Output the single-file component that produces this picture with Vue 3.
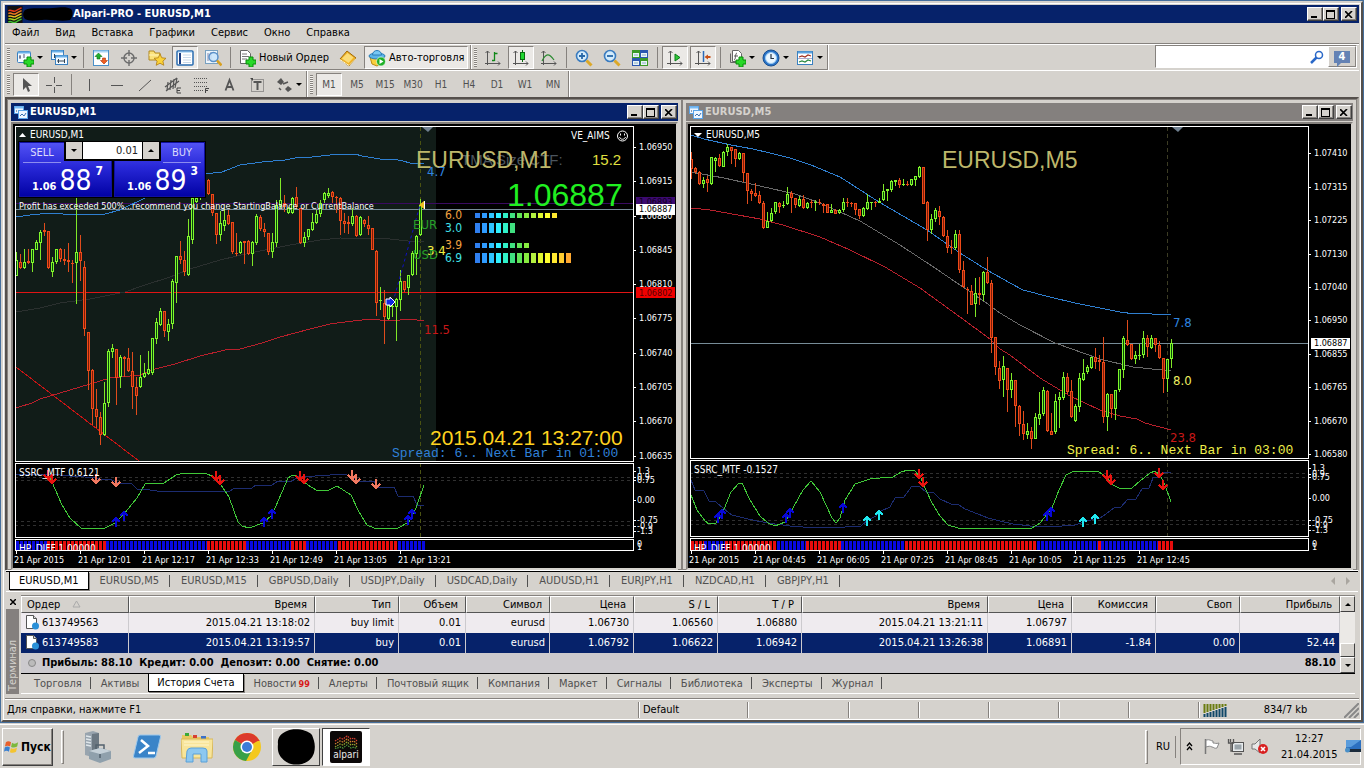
<script setup>
import { ref } from 'vue'

const menu = ['Файл', 'Вид', 'Вставка', 'Графики', 'Сервис', 'Окно', 'Справка']
const frames = ['M1', 'M5', 'M15', 'M30', 'H1', 'H4', 'D1', 'W1', 'MN']
const chartTabs = ['EURUSD,M1', 'EURUSD,M5', 'EURUSD,M15', 'GBPUSD,Daily', 'USDJPY,Daily', 'USDCAD,Daily', 'AUDUSD,H1', 'EURJPY,H1', 'NZDCAD,H1', 'GBPJPY,H1']
const termTabs = ['Торговля', 'Активы', 'История Счета', 'Новости', 'Алерты', 'Почтовый ящик', 'Компания', 'Маркет', 'Сигналы', 'Библиотека', 'Эксперты', 'Журнал']
const heads = ['Ордер', 'Время', 'Тип', 'Объем', 'Символ', 'Цена', 'S / L', 'T / P', 'Время', 'Цена', 'Комиссия', 'Своп', 'Прибыль']
const orders = [
  ['613749563', '2015.04.21 13:18:02', 'buy limit', '0.01', 'eurusd', '1.06730', '1.06560', '1.06880', '2015.04.21 13:21:11', '1.06797', '', '', ''],
  ['613749583', '2015.04.21 13:19:57', 'buy', '0.01', 'eurusd', '1.06792', '1.06622', '1.06942', '2015.04.21 13:26:38', '1.06891', '-1.84', '0.00', '52.44'],
]
const volume = ref('0.01')
const query = ref('')

/* Candles: high, body top, body bottom, low, direction; three units per pixel. */
const m1 = `397 420 467 467 g;403 425 444 447 r;388 427 445 447 g;388 423 430 432 r;386 388 428 455 g;360 366 389 391 g;331 336 368 420 g;309 331 336 349 r;333 334 445 446 r;410 426 457 470 g;387 388 427 433 g;385 386 418 427 r;388 416 422 434 r;369 420 427 457 r;421 428 431 489 r;234 397 430 551 g;345 397 422 482 r;423 441 626 648 r;636 636 754 811 r;748 750 866 915 r;808 868 892 925 r;877 891 944 974 r;787 850 944 947 g;687 693 848 861 g;672 684 695 713 g;687 688 773 855 r;705 711 772 803 g;708 710 718 770 r;684 714 752 757 r;697 754 802 868 r;770 802 827 885 r;705 771 800 804 g;729 759 772 775 g;694 747 762 765 g;653 655 760 764 g;593 606 656 672 g;564 573 616 619 g;573 574 632 652 r;598 613 635 662 g;478 484 613 627 g;409 409 488 549 g;363 408 421 432 r;393 421 457 467 r;297 348 466 468 g;230 235 359 372 g;230 235 245 248 g;180 190 235 240 g;150 160 230 232 g;177 180 223 225 r;222 223 280 288 r;279 280 346 372 r;272 309 346 362 g;268 300 317 332 g;270 286 311 315 r;305 307 397 402 r;338 398 402 407 r;363 366 400 402 g;362 363 368 431 r;361 364 402 404 r;364 367 402 438 g;283 289 368 375 g;285 290 327 332 r;309 328 337 352 r;338 340 395 405 r;340 367 396 413 g;240 255 368 380 g;174 240 258 265 g;225 250 262 275 r;260 265 278 282 g;231 233 279 281 g;201 232 262 264 r;265 265 370 371 r;337 352 370 380 g;327 328 352 359 g;280 307 330 333 g;270 283 309 312 g;240 250 283 290 g;215 220 240 250 g;204 218 228 235 g;214 216 230 250 r;228 230 235 278 r;232 233 304 345 r;279 304 312 340 r;288 305 312 342 r;264 288 312 317 g;286 288 348 350 r;288 290 346 349 g;298 301 312 320 r;288 316 326 344 r;323 325 391 391 r;391 392 550 587 r;500 541 543 570 g;510 548 592 672 r;545 555 598 600 g;540 558 562 590 g;534 538 560 662 g;450 483 541 572 g;483 484 511 515 r;465 466 503 524 g;392 400 466 468 g;345 347 402 465 g;238 255 345 347 g`
const m5 = `97 118 148 177 r;142 145 155 163 r;153 155 193 196 r;170 180 193 205 g;169 176 190 215 r;111 112 191 194 g;111 114 122 157 g;101 114 139 141 r;94 95 140 142 g;72 82 95 108 g;80 82 92 131 r;86 87 118 140 r;96 99 118 121 g;98 99 160 187 r;159 160 214 251 r;208 213 222 242 r;188 219 227 231 r;213 226 249 251 r;243 249 325 327 r;275 302 323 325 g;263 279 303 306 g;247 247 275 281 g;246 249 260 278 r;243 254 258 263 g;200 221 251 255 g;214 220 235 278 r;233 234 256 265 r;229 237 259 261 g;226 236 263 266 r;247 249 263 266 g;239 246 250 263 r;239 246 250 273 g;237 247 250 256 r;250 253 257 278 r;251 253 278 280 r;252 269 278 280 g;267 269 281 283 r;267 270 280 283 g;234 246 270 275 g;234 245 249 261 r;247 249 251 262 r;249 250 269 286 r;267 268 287 297 r;261 265 287 290 g;221 247 266 270 g;246 247 249 270 g;243 246 248 262 r;234 242 248 249 g;192 213 240 242 g;206 208 213 243 g;181 183 210 217 g;180 181 185 197 g;174 181 195 203 r;177 192 194 198 g;183 191 196 197 r;176 178 196 198 g;167 169 180 197 g;138 142 172 175 g;141 142 251 252 r;243 245 331 362 r;282 298 331 342 g;264 271 298 305 g;258 274 292 316 r;287 292 348 350 r;329 348 383 398 r;359 380 384 401 r;331 343 385 391 g;330 343 449 458 r;423 449 500 503 r;502 506 511 582 r;494 514 554 556 r;474 520 552 591 g;471 520 524 554 r;454 457 526 543 g;411 457 490 491 r;479 490 653 700 r;651 652 742 765 r;722 743 782 806 r;709 738 779 831 g;744 745 811 876 r;759 780 811 834 g;780 781 859 921 r;856 857 911 948 r;872 911 943 961 r;908 934 944 957 g;922 934 956 987 r;878 891 956 958 g;815 881 896 914 g;800 811 881 887 g;811 814 933 937 r;880 934 944 946 r;822 843 936 941 g;817 832 841 924 g;756 770 834 840 g;758 771 815 821 r;779 813 890 893 r;853 858 902 905 g;759 775 860 875 g;716 758 779 784 g;736 742 756 762 g;710 712 743 747 g;684 710 727 747 r;706 720 727 752 r;651 727 890 909 r;820 822 892 932 g;822 823 868 893 r;810 811 868 900 g;747 748 811 817 g;648 655 751 773 g;600 661 675 678 r;671 672 718 721 r;693 705 716 731 g;672 705 708 721 g;633 655 706 714 g;644 655 682 711 r;645 655 684 686 g;653 655 676 697 r;664 676 713 716 r;714 715 776 819 r;716 718 776 815 g;657 669 718 743 g`

function candles(text, x0) {
  const out = { g: ['', ''], r: ['', ''] }
  text.split(';').forEach((row, i) => {
    const [hi, top, bot, lo, side] = row.split(' ')
    const y = (v) => 120 + Math.round(v / 3)
    const x = x0 + 4 * i + 0.5
    const t = y(top) + 0.5
    const h = Math.max(0, y(bot) - y(top) - 1)
    out[side][0] += `M${x} ${y(hi)}V${y(lo)}`
    out[side][1] += h ? `M${x - 1} ${t}h2v${h}h-2z` : `M${x - 1.5} ${t}h3`
  })
  return out
}

const charts = [
  {
    name: 'EURUSD,M1', active: true, box: '13 124 663 444', l: 15, r: 633, main: 461, sub: 463, subEnd: 537, hist: 539,
    c: candles(m1, 16), now: 420, mark: 427,
    top: '16,217 30,215 50,213 63,214 80,215 105,214 120,210 145,198 205,174 222,172 240,165 262,162 285,160 300,157 312,157 330,155 355,154 362,156 380,159 398,160 403,161 410,163 424,163',
    mid: '16,312 40,308 60,303 90,299 125,292 145,285 170,277 190,269 220,260 250,253 290,245 320,240 340,238 390,239 408,241 424,242', midColor: '#2b302f',
    low: '16,408 32,403 40,399 60,393 80,387 110,378 140,375 155,369 175,364 200,356 225,350 240,349 262,343 280,337 310,329 330,324 345,322 370,319 390,321 410,319 424,321',
    line: 209, title: [416, 168],
    axis: [[147, '1.06950'], [181, '1.06915'], [216, '1.06880'], [250, '1.06845'], [284, '1.06810'], [318, '1.06775'], [353, '1.06740'], [387, '1.06705'], [421, '1.06670'], [456, '1.06635']],
    sax: [[471, '1.3'], [477, '0.9'], [480, '0.75'], [500, '0.00'], [520, '-0.75'], [526, '-0.9'], [531, '-1.3']],
    levels: [477, 480, 521, 525], ind: 'SSRC_MTF 0.6121',
    green: '48,475 52,482 62,505 70,518 81,528 105,528 115,523 123,515 137,498 145,484 164,483 176,475 184,473 205,473 216,478 221,485 229,497 238,522 242,526 249,528 263,523 272,515 282,492 288,478 293,475 297,476 308,485 316,490 329,490 337,486 351,495 359,512 367,525 374,528 398,528 409,522 416,508 424,485',
    navy: '16,474 45,474 60,475 70,476 85,477 97,478 100,479 112,480 118,483 132,484 137,489 150,490 157,491 230,491 235,488 252,488 256,485 272,485 278,481 292,481 298,477 315,476 330,475 345,474 352,477 358,481 374,481 378,487 394,487 398,496 413,496 417,505 424,505',
    down: [[48, 475, '#e81410'], [52, 479, '#e81410'], [96, 479, '#f07860'], [116, 482, '#f07860'], [216, 476, '#e81410'], [220, 480, '#e81410'], [300, 476, '#e81410'], [304, 479, '#e81410'], [352, 475, '#f07860'], [356, 479, '#f07860'], [376, 484, '#f07860']],
    up: [[116, 522, '#0808d8'], [124, 516, '#0808d8'], [264, 522, '#0808d8'], [272, 514, '#0808d8'], [408, 520, '#0808d8'], [412, 514, '#0808d8']],
    runs: [[16, 47, 0], [47, 106, 1], [106, 207, 0], [207, 246, 1], [246, 291, 0], [291, 306, 1], [306, 338, 0], [338, 398, 1], [398, 425, 0]],
    dates: ['2015', '12:01', '12:17', '12:33', '12:49', '13:05', '13:21'],
    spread: [392, 457, '#3080d8', 'Spread: 6.. Next Bar in 01:00'],
    tags: [[427, 176, '#2f86e0', '4.7'], [427, 255, '#f0f040', '3.4'], [424, 334, '#c81818', '11.5']],
  },
  {
    name: 'EURUSD,M5', active: false, box: '688 124 663 444', l: 690, r: 1308, main: 458, sub: 460, subEnd: 536, hist: 538,
    c: candles(m5, 691), now: 1167, mark: 1177,
    top: '691,135 704,139 731,145 753,149 770,153 790,158 811,165 840,177 879,202 927,230 960,253 987,270 1010,283 1023,290 1050,297 1075,303 1100,308 1120,312 1135,314 1145,313 1152,314 1171,314',
    mid: '691,172 724,178 760,186 795,194 820,203 860,221 900,245 935,268 960,285 985,302 1000,313 1020,325 1055,343 1100,359 1133,367 1171,371', midColor: '#6a6a6a',
    low: '691,208 710,210 738,215 760,219 783,225 820,237 850,250 885,267 920,288 960,317 990,339 1000,349 1010,355 1040,378 1070,396 1100,410 1120,416 1137,419 1145,423 1171,430',
    line: 343, title: [942, 168],
    axis: [[153, '1.07410'], [187, '1.07315'], [220, '1.07225'], [254, '1.07130'], [287, '1.07040'], [320, '1.06950'], [354, '1.06855'], [387, '1.06765'], [421, '1.06670'], [454, '1.06580']],
    sax: [[468, '1.3'], [474, '0.9'], [477, '0.75'], [498, '0.00'], [520, '-0.75'], [525, '-0.9'], [530, '-1.3']],
    levels: [473, 477, 520, 524], ind: 'SSRC_MTF -0.1527',
    green: '691,495 697,510 705,521 709,524 716,523 722,514 731,492 739,483 742,483 750,500 760,516 768,523 775,526 785,522 793,508 803,490 811,481 820,492 832,518 836,523 840,518 845,500 855,484 870,479 880,478 893,477 901,472 908,470 915,471 921,478 926,490 932,503 940,516 948,525 958,528 1032,528 1040,523 1052,508 1059,490 1066,475 1074,471 1098,471 1106,477 1113,485 1119,488 1132,488 1140,481 1150,473 1155,471 1160,475 1165,485 1171,502',
    navy: '691,480 695,490 704,491 709,501 716,502 724,509 732,515 744,518 757,521 775,524 790,526 803,527 845,527 861,526 868,520 876,516 881,511 890,507 895,498 904,497 912,486 919,486 926,492 934,493 940,499 951,504 959,505 965,509 978,514 988,518 1000,521 1013,524 1030,526 1050,527 1075,525 1087,521 1100,518 1106,514 1114,508 1121,507 1128,499 1136,499 1142,489 1149,488 1153,478 1160,477 1164,472 1171,472',
    down: [[919, 474, '#e81410'], [923, 482, '#e81410'], [1107, 475, '#e81410'], [1111, 480, '#e81410'], [1159, 473, '#e81410'], [1163, 485, '#e81410']],
    up: [[718, 518, '#0808d8'], [722, 514, '#0808d8'], [786, 518, '#0808d8'], [790, 513, '#0808d8'], [843, 508, '#0808d8'], [1047, 516, '#0808d8'], [1051, 512, '#0808d8'], [867, 521, '#20e8f0'], [879, 515, '#20e8f0'], [1083, 522, '#20e8f0'], [1095, 519, '#20e8f0']],
    runs: [[691, 704, 1], [704, 725, 0], [725, 777, 1], [777, 806, 0], [806, 841, 1], [841, 905, 0], [905, 1037, 1], [1037, 1098, 0], [1098, 1101, 1], [1101, 1158, 0], [1158, 1173, 1]],
    dates: ['2015', '04:45', '06:05', '07:25', '08:45', '10:05', '11:25', '12:45'],
    spread: [1067, 454, '#f0f04a', 'Spread: 6.. Next Bar in 03:00'],
    tags: [[1173, 327, '#2f86e0', '7.8'], [1173, 385, '#f0f060', '8.0'], [1170, 442, '#c81818', '23.8']],
  },
]

const heat = ['#2f7ff0', '#2f9cff', '#2fc4ff', '#30f0ff', '#30f0c8', '#40e080', '#62e458', '#88ec40', '#b4f040', '#e0f830', '#ffff30', '#ffe830', '#ffcc30', '#ffa830']
const meters = [[213, 5, 12, '6.0', '#f0a040', 219], [223, 10, 6, '3.0', '#40e0e8', 232], [243, 5, 8, '3.9', '#f0a040', 249], [253, 10, 14, '6.9', '#40e0e8', 262]]

const plus = '<path d="M9 8h4v3h3v4h-3v3H9v-3H6v-4h3z" transform="translate(2 0)" fill="#28d828" stroke="#0a8a0a"/>'
const win = '<rect x="1.5" y="2.5" width="13" height="11" rx="1" fill="#f4faff" stroke="#3a80c0"/><path d="M2 3.500h12" stroke="#6ab0e8" stroke-width="2"/>'
const icons = {
  newChart: win + '<path d="M4 6v4M3 8h2M8 5v4" stroke="#557"/>' + plus,
  profiles: '<rect x="1.500" y="1.500" width="12" height="9" fill="#f4faff" stroke="#3a80c0"/><path d="M2 2.500h11" stroke="#6ab0e8" stroke-width="2"/><path d="M4.500 5v4"  stroke="#345"/><rect x="5.500" y="6.500" width="12" height="9" fill="#f4faff" stroke="#3a80c0"/><path d="M6 7.500h11" stroke="#6ab0e8" stroke-width="2"/><path d="M8.500 10v4M7 12h7M14.500 10v4" stroke="#345"/>',
  market: '<rect x="1.500" y="1.500" width="15" height="15" fill="#fff" stroke="#4a90c8"/><path d="M2 2.500h14" stroke="#a8d4f4" stroke-width="2"/><path d="M6.500 4l3.500 3.500H8V10H5V7.500H3z" fill="#20b030" stroke="#0a7018" stroke-width=".6"/><path d="M12 15l-3.500-3.500h2V9h3v2.500h2z" fill="#f06020" stroke="#b03008" stroke-width=".6"/>',
  cross: '<g fill="none" stroke="#6c6c6c" stroke-width="1.400"><circle cx="9" cy="9" r="5"/><path d="M9 1v6M9 11v6M1 9h6M11 9h6"/></g>',
  folderStar: '<path d="M1 2h5l1 2h5v7H1z" fill="#fbe27a" stroke="#b08820"/><path d="M1 6h11" stroke="#fff3b8"/><path d="M12 5l1.800 3.800 4.200.5-3.100 2.800.9 4.200-3.800-2.100-3.800 2.100.9-4.200L6 9.300l4.200-.5z" fill="#fbd33a" stroke="#b07c10" stroke-width=".8"/>',
  navigator: '<rect x="1" y="2" width="16" height="14" rx="1" fill="#fff" stroke="#2a6cb0" stroke-width="1.500"/><path d="M2 3h14" stroke="#8cc4f0"/><path d="M3 4h2v11H3z" fill="#1c3c80"/><path d="M7 6h8M7 8.500h8M7 11h8M7 13.500h8" stroke="#c8d8e8"/>',
  tester: '<rect x="1.500" y="1.500" width="12" height="13" fill="#eef6fc" stroke="#78a0c0"/><path d="M4 4v8M7 3v8" stroke="#88a"/><circle cx="9.500" cy="8" r="4.500" fill="#c8e4fa" fill-opacity=".85" stroke="#5a90c8" stroke-width="1.500"/><path d="M13 11.500l4.500 5" stroke="#d8a020" stroke-width="2.600"/>',
  order: '<path d="M2.500 1.500h7l3 3v10h-10z" fill="#fff" stroke="#666"/><path d="M4 5h5M4 7.500h7M4 10h5" stroke="#777"/>' + plus,
  book: '<path d="M1 10L8 2l9 7-7 8z" fill="#f0b428" stroke="#a06808"/><path d="M3 9.500L8.500 4l6 4.500L9.500 14z" fill="#fbdc78"/><path d="M1 10.500l9 6 7-7" fill="none" stroke="#fff2c0"/>',
  auto: '<path d="M2 8h14l-2 6-5 3-5-2z" fill="#f8cf3c" stroke="#b88c14"/><ellipse cx="9" cy="7" rx="8" ry="3" fill="#5ab4e8" stroke="#2a7cb8"/><path d="M4.500 6c0-6 9-6 9 0z" fill="#78c8f4" stroke="#2a7cb8"/><circle cx="13" cy="12.500" r="4.500" fill="#20b028" stroke="#fff" stroke-width=".6"/><path d="M11.500 10v5l4-2.500z" fill="#fff"/>',
  bars: '<path d="M3.500 2v14M1 14.500h15M1.500 4l2-2 2 2M14 12.500l2 2-2 2" fill="none" stroke="#555"/><path d="M10.500 3v9M10.500 4.500h3M8 11.500h2.500" fill="none" stroke="#108818" stroke-width="1.300"/>',
  candle: '<path d="M3.500 2v14M1 14.500h15M1.500 4l2-2 2 2M14 12.500l2 2-2 2" fill="none" stroke="#555"/><path d="M10.500 1v12" stroke="#0a6a10"/><rect x="8.500" y="3.500" width="4" height="7" fill="#20d830" stroke="#0a6a10"/>',
  linec: '<path d="M3.500 2v14M1 14.500h15M1.500 4l2-2 2 2M14 12.500l2 2-2 2" fill="none" stroke="#555"/><path d="M2 12c4-8 7-8 12-1" fill="none" stroke="#2a8a30" stroke-width="1.200"/>',
  zin: '<circle cx="7" cy="7" r="5.500" fill="#d4ecfc" stroke="#3a7cc0" stroke-width="1.600"/><path d="M7 4v6M4 7h6" stroke="#2868a8" stroke-width="1.800"/><path d="M11.500 11.500l5 5" stroke="#dca828" stroke-width="3"/>',
  zout: '<circle cx="7" cy="7" r="5.500" fill="#d4ecfc" stroke="#3a7cc0" stroke-width="1.600"/><path d="M4 7h6" stroke="#2868a8" stroke-width="1.800"/><path d="M11.500 11.500l5 5" stroke="#dca828" stroke-width="3"/>',
  tile: '<path d="M1 1h8v8H1zM9 9h8v8H9z" fill="#3a9a28"/><path d="M9 1h8v8H9zM1 9h8v8H1z" fill="#2a58b0"/><path d="M2 4h6v4H2zM10 4h6v4h-6zM2 12h6v4H2zM10 12h6v4h-6z" fill="#e8f4f8"/><path d="M3 6h4M11 6h4M3 14h4M11 14h4" stroke="#8ab0c0"/>',
  scroll: '<path d="M4.500 2v14M1 14.500h15M2.500 4l2-2 2 2M14 12.500l2 2-2 2" fill="none" stroke="#555"/><path d="M9 5v7l5-3.500z" fill="#30c838" stroke="#0a7a18"/>',
  shift: '<path d="M4.500 2v14M1 14.500h15M2.500 4l2-2 2 2M14 12.500l2 2-2 2" fill="none" stroke="#555"/><path d="M9.500 2v11" stroke="#2a6ab8" stroke-width="1.500"/><path d="M10.500 8L14 5.500V7h2.500v2H14v1.500z" fill="#c85018"/>',
  indic: '<path d="M4.500 1.500h6l3 3v8h-9z" fill="#fff" stroke="#666"/><path d="M2.500 4.500v9h8" fill="none" stroke="#666"/><path d="M9 4c-2 0-1 7-3 7M6 7h4" fill="none" stroke="#555"/>' + plus,
  clock: '<circle cx="9" cy="9" r="8" fill="#2a74c8" stroke="#174e90"/><circle cx="9" cy="9" r="5.500" fill="#eaf6ff" stroke="#9cccf4"/><path d="M9 5v4.500h3" fill="none" stroke="#234" stroke-width="1.200"/>',
  templ: '<rect x="1.500" y="2.500" width="15" height="13" fill="#fff" stroke="#3a80c0"/><path d="M2 3.500h14" stroke="#5aa4e0" stroke-width="2"/><path d="M3 8l3-1 3 1 3-2 3 1" fill="none" stroke="#a03020" stroke-width="1.200"/><path d="M3 13l3-1 3 1 3-2 3 1" fill="none" stroke="#2a8a40" stroke-width="1.200"/><path d="M2 9.500h14" stroke="#aac"/>',
  cursor: '<path d="M6 2v12l3-3 2 5 2-1-2-5h4z" fill="#555"/>',
  cross2: '<path d="M9.500 1v6M9.500 11v6M1 9.500h6M11 9.500h6" stroke="#555"/>',
  vline: '<path d="M9.500 3v12" stroke="#555"/>',
  hline: '<path d="M3 9.500h12" stroke="#555"/>',
  trend: '<path d="M3 15L15 4" stroke="#555"/>',
  channel: '<path d="M1 11L13 2M2 15L15 5M4 6l-1 8M7 4L6 14M10 3L9 13M13 2l-2 10" stroke="#555" stroke-width="1.200"/><path d="M17 12h-4v5h4M13 14.500h3" fill="none" stroke="#444"/>',
  fibo: '<path d="M2 2.500h14M2 6.500h14M2 10.500h14M2 14.500h9" stroke="#555" stroke-dasharray="1 1"/><path d="M17 12.500h-3.500V17M13.500 14.500H16" fill="none" stroke="#444"/>',
  txt: '<path d="M5.500 14.500L9.500 4l4 10.500M7 11h5" fill="none" stroke="#555" stroke-width="1.800"/>',
  label: '<rect x="3.500" y="3.500" width="12" height="12" fill="none" stroke="#555" stroke-dasharray="1 1"/><path d="M5.500 6h8M9.500 6v8" stroke="#555" stroke-width="2"/><path d="M2 2h3v3z" fill="#444"/>',
  arrows: '<path d="M2 6l4-4 3 4-3 3zM10 13l3-3 4 3-4 3z" fill="#555"/><path d="M4 12l2 2M8 8l5-2" stroke="#555" stroke-width="1.500"/>',
  child: '<rect x=".5" y=".5" width="9" height="7" fill="#eef6ff" stroke="#5aa4e8"/><path d="M1 1.500h8" stroke="#7abcf4" stroke-width="2"/><rect x="4.500" y="4.500" width="9" height="8" fill="#eef6ff" stroke="#5aa4e8"/><path d="M6 10l2-2 2 2 2-3" fill="none" stroke="#3a70b0"/><path d="M2 5h1" stroke="#346"/>',
}
const bar1 = [
  { i: 'newChart', t: 'Новый график', d: 1 }, { i: 'profiles', t: 'Профили', d: 1 }, { s: 1 },
  { i: 'market', t: 'Обзор рынка' }, { i: 'cross', t: 'Окно данных' }, { i: 'folderStar', t: 'Навигатор' },
  { i: 'navigator', t: 'Терминал', on: 1 }, { i: 'tester', t: 'Тестер стратегий' }, { s: 1 },
  { i: 'order', text: 'Новый Ордер' }, { i: 'book', t: 'MetaEditor', g: 1 }, { i: 'auto', text: 'Авто-торговля', on: 1, g: 1 },
]
const bar2 = [
  { i: 'bars', t: 'Бары' }, { i: 'candle', t: 'Свечи', on: 1 }, { i: 'linec', t: 'Линия' }, { s: 1 },
  { i: 'zin', t: 'Увеличить' }, { i: 'zout', t: 'Уменьшить' }, { i: 'tile', t: 'Окна рядом' }, { s: 1 },
  { i: 'scroll', t: 'Автопрокрутка', on: 1 }, { i: 'shift', t: 'Сдвиг графика', on: 1 }, { s: 1 },
  { i: 'indic', t: 'Индикаторы', d: 1 }, { i: 'clock', t: 'Периоды', d: 1 }, { i: 'templ', t: 'Шаблоны', d: 1 },
]
const bar3 = [
  { i: 'cursor', t: 'Курсор', on: 1 }, { i: 'cross2', t: 'Перекрестие' }, { s: 1 },
  { i: 'vline', t: 'Вертикальная линия' }, { i: 'hline', t: 'Горизонтальная линия' }, { i: 'trend', t: 'Трендовая линия' },
  { i: 'channel', t: 'Канал' }, { i: 'fibo', t: 'Фибоначчи' }, { i: 'txt', t: 'Текст' }, { i: 'label', t: 'Метка' },
  { i: 'arrows', t: 'Стрелки', d: 1 },
]
</script>

<template>
  <div class="desktop">
    <main class="window">
      <header class="title">
        <svg class="logo" viewBox="0 0 16 18"><rect width="16" height="18" fill="#111" /><g fill="none" stroke-width="1.500"><path d="M1 5c3-2 5 2 8 0s4-2 6-3" stroke="#e83818" /><path d="M1 8c3-2 5 2 8 0s4-2 6-3" stroke="#f07820" /><path d="M1 11c3-2 5 2 8 0s4-2 6-3" stroke="#f0c020" /><path d="M1 14c3-2 5 2 8 0s4-2 6-3" stroke="#a0d020" /><path d="M1 17c3-2 5 2 8 0s4-2 6-3" stroke="#40c030" /></g></svg>
        <svg class="scrib" viewBox="0 0 50 14"><path d="M2 3C8 0 20 2 30 1s14-1 18 1c3 4 1 9-1 11-10 2-18-1-28 0S6 14 2 12C-1 9 0 5 2 3z" fill="#000" /></svg>
        <h1>Alpari-PRO - EURUSD,M1</h1>
        <div class="wbtns">
          <button aria-label="Свернуть"><i class="min"></i></button><button aria-label="Развернуть"><i class="max"></i></button><button class="x" aria-label="Закрыть"><svg viewBox="0 0 8 7"><path d="M0 0l7 7M7 0L0 7" stroke="#000" stroke-width="1.600" /></svg></button>
        </div>
      </header>
      <nav class="menu"><a v-for="m in menu" :key="m" href="#">{{ m }}</a></nav>

      <div class="bars">
        <div class="row">
          <div class="tools">
            <span class="grip"></span>
            <template v-for="(b, k) in bar1" :key="k">
              <span v-if="b.s" class="sep"></span>
              <button v-else class="tb" :class="{ on: b.on, wide: b.d, txt: b.text, gap: b.g }" :aria-label="b.t || b.text">
                <svg class="ico" viewBox="0 0 18 18" v-html="icons[b.i]"></svg>
                <span v-if="b.text">{{ b.text }}</span><i v-if="b.d" class="dd"></i>
              </button>
            </template>
          </div>
          <div class="tools">
            <span class="grip"></span>
            <template v-for="(b, k) in bar2" :key="k">
              <span v-if="b.s" class="sep"></span>
              <button v-else class="tb" :class="{ on: b.on, wide: b.d }" :aria-label="b.t">
                <svg class="ico" viewBox="0 0 18 18" v-html="icons[b.i]"></svg><i v-if="b.d" class="dd"></i>
              </button>
            </template>
          </div>
          <div class="search">
            <input v-model="query" type="text" aria-label="Поиск" />
            <svg class="lens" viewBox="0 0 14 14"><circle cx="9" cy="5" r="3.500" fill="#fff" stroke="#2a68c8" stroke-width="1.500" /><path d="M6.500 7.500L1 13" stroke="#2a68c8" stroke-width="2.500" /></svg>
            <button aria-label="Сообщения"><span class="bubble">4</span></button>
          </div>
        </div>
        <div class="row">
          <div class="tools">
            <span class="grip"></span>
            <template v-for="(b, k) in bar3" :key="k">
              <span v-if="b.s" class="sep"></span>
              <button v-else class="tb" :class="{ on: b.on, wide: b.d }" :aria-label="b.t">
                <svg class="ico" viewBox="0 0 18 18" v-html="icons[b.i]"></svg><i v-if="b.d" class="dd"></i>
              </button>
            </template>
          </div>
          <div class="tools">
            <span class="grip"></span>
            <button v-for="(f, k) in frames" :key="f" class="tb tf" :class="{ on: k === 0 }">{{ f }}</button>
          </div>
        </div>
      </div>

      <section class="mdi">
        <article v-for="(c, n) in charts" :key="c.name" class="child">
          <header class="ctitle" :class="{ off: !c.active }">
            <svg class="cico" viewBox="0 0 14 13" v-html="icons.child"></svg>
            <h2>{{ c.name }}</h2>
            <div class="wbtns">
              <button aria-label="Свернуть"><i class="min"></i></button><button aria-label="Развернуть"><i class="max"></i></button><button class="x" aria-label="Закрыть"><svg viewBox="0 0 8 7"><path d="M0 0l7 7M7 0L0 7" stroke="#000" stroke-width="1.600" /></svg></button>
            </div>
          </header>
          <div class="cbody">
            <svg class="chart" :viewBox="c.box">
              <defs><clipPath :id="'h' + n"><rect :x="c.l" :y="c.hist" width="300" :height="550 - c.hist" /></clipPath></defs>
              <rect v-if="n === 0" x="16" y="127" width="420" height="334" fill="#111c18" />
              <g shape-rendering="crispEdges" fill="none">
                <path :d="`M${c.now + 0.5} 127V${c.subEnd}`" :stroke="n ? '#3c3c24' : '#4a5212'" stroke-dasharray="4 3" />
                <path v-for="l in c.levels" :key="l" :d="`M${c.l} ${l + 0.5}H${c.r}`" stroke="#303030" stroke-dasharray="3 3" />
                <template v-if="n === 0">
                  <path d="M16 203.500H634" stroke="#3a0a60" />
                  <path d="M16 292.500H634" stroke="#e01414" />
                  <path d="M16 367L139 461" stroke="#c81414" />
                </template>
                <path :d="`M${c.l} ${c.line + 0.5}H${c.r}`" stroke="#778c98" />
                <polyline :points="c.mid" :stroke="c.midColor" />
                <polyline :points="c.top" stroke="#2f7fd0" />
                <polyline :points="c.low" stroke="#b8202c" />
                <path :d="c.c.r[0]" stroke="#e04c1c" />
                <path :d="c.c.r[1]" stroke="#f04a18" fill="#7c1c08" />
                <path :d="c.c.g[0]" stroke="#80e828" />
                <path :d="c.c.g[1]" stroke="#80f82c" fill="#06480a" />
                <polyline :points="c.navy" stroke="#1c2c70" />
                <polyline :points="c.green" stroke="#40c838" />
                <path v-for="(r, k) in c.runs" :key="k" :d="`M${r[0]} 545H${r[1]}`" :stroke="r[2] ? '#e80c0c' : '#0808e0'" stroke-width="9" stroke-dasharray="3 1" />
                <path v-for="(a, k) in c.down" :key="'d' + k" :d="`M${a[0]} ${a[1] - 5}v9M${a[0] - 4} ${a[1]}l4 4 4-4`" :stroke="a[2]" stroke-width="2" />
                <path v-for="(a, k) in c.up" :key="'u' + k" :d="`M${a[0]} ${a[1] + 5}v-9M${a[0] - 4} ${a[1]}l4-4 4 4`" :stroke="a[2]" stroke-width="2" />
                <g stroke="#fff">
                  <rect :x="c.l + 0.5" y="126.500" :width="c.r - c.l" :height="c.main - 126" />
                  <rect :x="c.l + 0.5" :y="c.sub + 0.5" :width="c.r - c.l" :height="c.subEnd - c.sub" />
                  <rect :x="c.l + 0.5" :y="c.hist + 0.5" :width="c.r - c.l" :height="550 - c.hist" />
                  <path v-for="a in c.axis" :key="a[0]" :d="`M${c.r} ${a[0] + 0.5}h3`" />
                  <path v-for="a in c.sax" :key="'s' + a[0]" :d="`M${c.r} ${a[0] + 0.5}h3`" />
                  <path v-for="(d, k) in c.dates" :key="d" :d="`M${c.l + 1.5 + 64 * k} 551v3`" />
                </g>
              </g>
              <path :d="`M${c.mark - 5} 127h11l-5 5z`" fill="#708090" />

              <template v-if="n === 0">
                <text class="a" x="461" y="165" font-size="15" fill="#4c555e">TMA Size CTF:</text>
                <text class="a" x="592" y="165" font-size="15" fill="#e0e040">15.2</text>
              </template>
              <text class="a" :x="c.title[0]" :y="c.title[1]" font-size="23" fill="#bdb76b">{{ c.name }}</text>
              <text v-for="t in c.tags" :key="t[3]" :x="t[0]" :y="t[1]" font-size="13" :fill="t[2]">{{ t[3] }}</text>
              <text class="m" :x="c.spread[0]" :y="c.spread[1]" font-size="13" :fill="c.spread[2]">{{ c.spread[3] }}</text>

              <template v-if="n === 0">
                <path d="M393 302L420 205" stroke="#1010c0" stroke-dasharray="3 3" />
                <path d="M386 299h4v-2l5 5-5 5v-2h-4z" fill="#1028e0" stroke="#fff" />
                <path d="M419 205l5-4v8z" fill="#f0c020" /><path d="M424.500 201v8" stroke="#fff" />
                <text class="a" x="507" y="206" font-size="32" fill="#20f020">1.06887</text>
                <text class="a" x="430" y="445" font-size="21" fill="#ffd21f">2015.04.21 13:27:00</text>
                <text x="413" y="229" font-size="13" fill="#28a028">EUR</text>
                <text x="413" y="259" font-size="13" fill="#28a028">USD</text>
                <g v-for="m in meters" :key="m[0]">
                  <text x="445" :y="m[5]" font-size="12" :fill="m[4]">{{ m[3] }}</text>
                  <rect v-for="k in m[2]" :key="k" :x="468 + 7 * k" :y="m[0]" width="5" :height="m[1]" :fill="heat[k - 1]" />
                </g>
                <text x="19" y="209" font-size="9" fill="#fff">Profit has exceeded 500%...recommend you change StartingBalance or CurrentBalance</text>
                <text x="571" y="139" font-size="10" fill="#fff">VE_AIMS</text>
                <g fill="none" stroke="#fff"><circle cx="622.500" cy="136" r="5" /><path d="M619.500 137c1 3 5 3 6 0M620.500 133.500v2M624.500 133.500v2" /></g>
                <path d="M19 137h7l-3.500-4z" fill="#fff" />
              </template>
              <path v-else d="M694 133h8l-4 4z" fill="#fff" />
              <text :x="c.l + (n ? 16 : 15)" y="138" font-size="10" fill="#fff">{{ c.name }}</text>
              <text :x="c.l + 4" :y="c.sub + 13" font-size="10" fill="#fff">{{ c.ind }}</text>
              <text :x="c.l + 4" y="552" font-size="10" fill="#fff" :clip-path="`url(#h${n})`">HP_DIFF 1.00000</text>
              <g font-size="9" fill="#fff">
                <text v-for="a in c.axis" :key="a[0]" :x="c.r + 6" :y="a[0] + 3">{{ a[1] }}</text>
                <text v-for="a in c.sax" :key="'s' + a[0]" :x="c.r + 4" :y="a[0] + 3">{{ a[1] }}</text>
                <text :x="c.r + 4" y="547">0</text><text :x="c.r + 4" y="550">1</text>
                <text v-for="(d, k) in c.dates" :key="'x' + d" :x="c.l - 1 + 64 * k" y="563">21 Apr {{ d }}</text>
                <template v-if="n === 0">
                  <rect x="636" y="197" width="39" height="11" fill="#3c0a70" />
                  <text x="639" y="205" fill="#10001c">1.06893</text>
                  <rect x="636" y="287" width="39" height="11" fill="#f00000" />
                  <text x="639" y="296" fill="#500">1.06802</text>
                </template>
                <rect :x="c.r + 3" :y="c.line - 5" width="39" height="11" fill="#fff" />
                <text :x="c.r + 6" :y="c.line + 3" fill="#000">1.06887</text>
              </g>
            </svg>
            <div v-if="n === 0" class="deal">
              <button class="side"><span class="lbl">SELL</span><span class="px"><b>1.06</b><span class="big">88</span><sup>7</sup></span></button>
              <button class="side buy"><span class="lbl">BUY</span><span class="px"><b>1.06</b><span class="big">89</span><sup>3</sup></span></button>
              <div class="vol">
                <button aria-label="Меньше"><i class="dd"></i></button>
                <input v-model="volume" type="text" aria-label="Объем" />
                <button aria-label="Больше"><i class="du"></i></button>
              </div>
            </div>
          </div>
        </article>
      </section>

      <nav class="ctabs">
        <button v-for="(t, k) in chartTabs" :key="t" :class="{ cur: k === 0 }">{{ t }}</button>
        <span class="arr"><i></i><i class="rt"></i></span>
      </nav>

      <section class="term">
        <aside>
          <button aria-label="Закрыть терминал"><svg viewBox="0 0 6 6"><path d="M0 0l6 6M6 0L0 6" stroke="#000" stroke-width="1.500" /></svg></button>
          <span>Терминал</span>
        </aside>
        <div class="panel">
          <div class="grid">
            <div class="data">
              <table>
                <colgroup>
                  <col class="c1" /><col class="c2" /><col class="c3" /><col class="c4" /><col class="c3" span="4" /><col class="c2" /><col class="c3" span="3" /><col class="c5" />
                </colgroup>
                <thead><tr><th v-for="(h, k) in heads" :key="k">{{ h }}<svg v-if="k === 0" class="sort" viewBox="0 0 9 8"><path d="M4.500 1L8 7H1z" fill="none" stroke="#aaa" /></svg></th></tr></thead>
                <tbody>
                  <tr v-for="(o, k) in orders" :key="o[0]" :class="{ sel: k === 1 }">
                    <td v-for="(v, j) in o" :key="j"><svg v-if="j === 0" class="doc" viewBox="0 0 14 15"><path d="M1.500.5h7l3 3v10h-10z" fill="#fff" stroke="#555" /><path d="M8.500.5v3h3" fill="#ddd" stroke="#555" /><circle cx="10.500" cy="11" r="3.500" fill="#2a90d8" /></svg>{{ v }}</td>
                  </tr>
                </tbody>
              </table>
              <p class="sum"><i></i><b>Прибыль: 88.10&nbsp; Кредит: 0.00&nbsp; Депозит: 0.00&nbsp; Снятие: 0.00</b><b class="tot">88.10</b></p>
            </div>
            <div class="scroll"><button aria-label="Вверх"><i class="du"></i></button><span class="track"><span class="thumb"></span></span><button aria-label="Вниз"><i class="dd"></i></button></div>
          </div>
          <nav class="ttabs"><button v-for="(t, k) in termTabs" :key="t" :class="{ cur: k === 2, pre: k === 1 }">{{ t }}<b v-if="k === 3">99</b></button></nav>
        </div>
      </section>

      <footer class="status">
        <span class="s0">Для справки, нажмите F1</span><span class="s1">Default</span><span class="s2"></span><span class="s3"></span><span class="s3"></span><span class="s3"></span><span class="s3"></span><span class="s3"></span>
        <span class="s4">
          <svg class="sig" viewBox="0 0 24 13"><path v-for="k in 8" :key="k" :d="`M${3 * k - 1.5} 0v${10 - k}`" stroke="#6a7c10" stroke-width="2" /><path v-for="k in 8" :key="'b' + k" :d="`M${3 * k - 1.5} ${11 - k}V13`" stroke="#104868" stroke-width="2" /></svg>
          <span class="kb">834/7 kb</span>
          <svg class="size" viewBox="0 0 15 15"><path d="M0 15L15 0M5 15L15 5M10 15l5-5" stroke="#888" stroke-width="2" /></svg>
        </span>
      </footer>
    </main>

    <div class="taskbar">
      <button class="start"><svg viewBox="0 0 17 16"><path d="M2 3c2-2 4-1 5.500 0L6.500 7.500C5 6.500 3 6 1 7.500z" fill="#e8602c" /><path d="M8.500 3.500c2 1.300 4 1.300 6.500-.5l-1 4.500c-2.500 1.500-4.500 1.300-6.500.5z" fill="#7cb83c" /><path d="M.8 8.500c2-1.500 4-1 5.500 0L5.200 13c-1.500-1-3.500-1.500-5.200 0z" fill="#3a80d0" /><path d="M7.300 9c2 1.300 4 1.300 6.500-.5l-1 4.500c-2.500 1.500-4.500 1.300-6.500.5z" fill="#f4c430" /></svg>Пуск</button>
      <span class="tgrip"></span>
      <a href="#" aria-label="Диспетчер сервера"><svg viewBox="0 0 32 32"><path d="M4 2l8-2 6 2v22l-7 2-7-2z" fill="#98a4ae" /><path d="M11 3l7-1v22l-7 2z" fill="#6c7882" /><path d="M5 5l5 1M5 8l5 1M5 11l5 1M5 14l5 1" stroke="#dfe6ea" stroke-width="1.500" /><path d="M8 20l11-3 11 3v8l-11 4-11-4z" fill="#8fa0ac" /><path d="M8 20l11 3 11-3-11-3z" fill="#c4d0d8" /><path d="M15 18v-4h8v4M19 23v4" fill="none" stroke="#53626e" stroke-width="1.500" /></svg></a>
      <a href="#" aria-label="PowerShell"><svg viewBox="0 0 32 32"><path d="M9 4h19q2 0 1.500 2L25 25q-.5 2-2.500 2H4q-2 0-1.500-2L7 6q.5-2 2-2z" fill="#3a84c8" stroke="#9cc8ec" /><path d="M10 9l7 6-9 7M17 22h7" fill="none" stroke="#fff" stroke-width="2.500" /></svg></a>
      <a href="#" aria-label="Проводник"><svg viewBox="0 0 32 32"><path d="M1 4h9l2 2h16v5H1z" fill="#e8c860" /><path d="M4 2h4v3H4z" fill="#3aa838" /><path d="M12 4h4v3h-4z" fill="#d84030" /><path d="M20 5h5v3h-5z" fill="#3a70c8" /><path d="M0 8h32l-1 19H1z" fill="#f8e59a" stroke="#d8b858" /><path d="M3 11h25M3 14h25" stroke="#fff6cc" /><path d="M6 20q1-3 4-3h12q4 0 4 3v11h-6v-8h-8v8H5z" fill="#8cc8f0" stroke="#5aa0d8" /></svg></a>
      <a href="#" aria-label="Chrome"><svg viewBox="0 0 32 32"><circle cx="16" cy="16" r="14" fill="#f4c81c" /><path d="M16 16L3.900 9A14 14 0 0 1 28.200 9.200z" fill="#dc3a2c" /><path d="M16 16L3.900 9A14 14 0 0 0 15 30l6-11z" fill="#38a048" /><path d="M16 9.500h12.400" stroke="#dc3a2c" stroke-width="1" /><circle cx="16" cy="16" r="6.500" fill="#fff" /><circle cx="16" cy="16" r="5" fill="#3a7cd8" /></svg></a>
      <button class="app" aria-label="Приложение"><svg viewBox="0 0 38 36"><path d="M10 2c6-3 20-2 25 4 2 5 4 10 2 18-2 6-6 9-12 11-6 1-12 1-17-3C3 28 0 24 1 15 0 8 5 4 10 2z" fill="#000" /></svg></button>
      <button class="app run"><span class="alp"><svg viewBox="0 0 24 14"><g fill="none" stroke-width="1.200" stroke-dasharray="1.500 1"><path d="M1 6l5-3 3 1 4-3 4 3 3-1 3 3" stroke="#d84030" /><path d="M1 9l5-3 3 1 4-3 4 3 3-1 3 3" stroke="#d88030" /><path d="M1 12l5-3 3 1 4-3 4 3 3-1 3 3" stroke="#98a830" /><path d="M1 14l5-2 3 1 4-3 4 3 3-1 3 2" stroke="#50a040" /></g></svg>alpari</span></button>
      <span class="fill"></span>
      <span class="tgrip"></span>
      <span class="lang">RU</span>
      <div class="tray">
        <svg class="chev" viewBox="0 0 7 9"><path d="M1 4l2.500-3L6 4M1 8l2.500-3L6 8" fill="none" stroke="#000" stroke-width="1.300" /></svg>
        <svg viewBox="0 0 17 17"><path d="M2.500 1v15" stroke="#777" stroke-width="1.500" /><path d="M3 2c4-1 5 1 7 1v2c2 0 3 1 6 0l-2 5c-3 1-3-1-5-1-2-1-3-1-6 0z" fill="#fff" stroke="#888" /></svg>
        <svg viewBox="0 0 17 17"><rect x="5.500" y="4.500" width="11" height="9" fill="#e8ecee" stroke="#555" /><rect x="7.500" y="6.500" width="7" height="5" fill="#9aa4aa" /><path d="M7 16h8" stroke="#555" stroke-width="1.500" /><path d="M1.500 1v4h5V1M3.500 1v3M4 5v8h2" fill="none" stroke="#555" stroke-width="1.300" /></svg>
        <svg viewBox="0 0 17 17"><path d="M1 6h3l5-5v14l-5-4H1z" fill="#e8e8e8" stroke="#777" /><circle cx="12" cy="11" r="5" fill="#d82020" /><path d="M10 9l4 4M14 9l-4 4" stroke="#fff" stroke-width="1.600" /></svg>
        <time>12:27<br />21.04.2015</time>
        <svg class="desk" viewBox="0 0 16 13"><path d="M1 0h15v9H1z" fill="#2c70c0" /><path d="M1 0h15L6 7H1z" fill="#5a9cdc" /><path d="M1 9h15v3H1z" fill="#1c2c3c" /><circle cx="2.500" cy="10" r="2.500" fill="#4a90c8" /></svg>
      </div>
    </div>
  </div>
</template>

<style>
body { background: #3a6ea5; }
</style>

<style scoped>
* { box-sizing: border-box; margin: 0; }
.desktop { min-height: 100vh; display: flex; flex-direction: column; background: #466f9c; color: #000; font: 11px/14px "DejaVu Sans Condensed", "DejaVu Sans", sans-serif; }
button, input { font: inherit; color: inherit; padding: 0; border: 0; border-radius: 0; background: none; }
a { color: inherit; text-decoration: none; }
svg { display: block; flex: none; }
.window { margin: 1px 1px 0; padding: 2px; border: 2px solid; border-color: #d5d2cd #55504c #55504c #d5d2cd; box-shadow: inset 1px 1px #fff, inset -1px -1px #fff; background: #d5d2cd; flex: 1; display: flex; flex-direction: column; }
.title, .ctitle { display: flex; align-items: center; height: 18px; background: #06226a; color: #fff; }
.title { padding-right: 2px; }
h1, h2 { font-size: 11px; line-height: 18px; font-weight: bold; flex: 1; }
.logo { width: 16px; height: 17px; margin-left: 2px; }
.scrib { width: 50px; height: 14px; }
.wbtns { display: flex; }
.wbtns button { width: 16px; height: 14px; background: #d5d2cd; border: 1px solid; border-color: #fff #404040 #404040 #fff; box-shadow: inset -1px -1px #86827e; position: relative; }
.wbtns .x { margin-left: 2px; }
.wbtns svg { width: 8px; height: 7px; margin: 0 auto; }
.min { display: block; width: 6px; height: 2px; background: #000; margin: 6px 0 0 3px; }
.max { display: block; width: 9px; height: 9px; border: 1px solid #000; border-top-width: 2px; margin: 0 0 0 2px; }
.menu { display: flex; gap: 16px; height: 20px; padding: 3px 7px 0; }
.bars { border-top: 1px solid #86827e; }
.row { display: flex; height: 26px; border-top: 1px solid #fff; border-bottom: 0; }
.row + .row { height: 27px; }
.tools { display: flex; align-items: center; padding: 1px 2px 0 0; border-right: 1px solid #86827e; border-bottom: 1px solid #86827e; box-shadow: 1px 0 #fff; gap: 2px; }
.row + .row .tools { border-bottom: 0; }
.grip { width: 3px; height: 19px; margin: 0 1px 0 2px; background: repeating-linear-gradient(#86827e 0 1px, #f4f2ee 1px 2px); }
.tools + .tools .grip { margin-left: 3px; }
.sep { width: 1px; height: 21px; background: #86827e; margin: 0 2px; }
.tb { display: flex; align-items: center; justify-content: center; width: 26px; height: 23px; }
.tb.on { background: #ebe9e6; border: 1px solid; border-color: #86827e #fff #fff #86827e; }
.tb.wide { width: 32px; gap: 3px; }
.tb.txt { width: auto; padding: 0 3px; gap: 3px; white-space: nowrap; }
.tb.gap { margin-left: 1px; }
.tb.tf { font-size: 10px; color: #505050; }
.ico { width: 18px; height: 18px; }
.dd, .du { display: block; width: 0; height: 0; border: 3px solid transparent; border-bottom: 0; border-top-color: #000; }
.du { border: 3px solid transparent; border-top: 0; border-bottom-color: #000; }
.search { margin-left: auto; display: flex; align-items: center; width: 202px; height: 23px; background: #fff; border: 1px solid; border-color: #86827e #fff #fff #86827e; margin-right: 2px; }
.search input { flex: 1; min-width: 0; outline: 0; padding: 0 4px; }
.lens { width: 14px; height: 14px; margin-right: 4px; }
.search button { width: 28px; height: 21px; background: #d5d2cd; border: 1px solid; border-color: #fff #86827e #86827e #fff; display: flex; align-items: center; justify-content: center; }
.bubble { width: 16px; height: 12px; line-height: 12px; background: #6482b4; color: #fff; font-weight: bold; text-align: center; position: relative; }
.bubble::after { content: ""; position: absolute; left: 3px; top: 12px; border: 4px solid transparent; border-bottom-width: 0; border-left-width: 0; border-top-color: #6482b4; }
.mdi { display: grid; grid-template-columns: 1fr 1fr; border: 2px solid #55504c; border-bottom: 0; border-right-color: #aaa6a0; }
.child { border: 4px solid #d5d2cd; border-bottom-width: 0; background: #d5d2cd; box-shadow: inset 0 0 0 1px #d5d2cd; outline: 1px solid #86827e; outline-offset: -1px; }
.ctitle { padding-right: 1px; margin-bottom: 1px; }
.ctitle.off { background: #84807e; color: #d5d2cd; }
.cico { width: 14px; height: 13px; margin: 0 2px 0 3px; }
.cbody { position: relative; border: 2px solid; border-color: #86827e #d5d2cd #d5d2cd #86827e; background: #000; }
.chart { width: 100%; height: auto; font-family: "DejaVu Sans Condensed", "DejaVu Sans", sans-serif; }
.a { font-family: "Liberation Sans", Arial, sans-serif; }
.m { font-family: "Liberation Mono", monospace; }
.deal { position: absolute; left: 5px; top: 17px; display: grid; grid-template-columns: 93px 91px; gap: 2px; padding: 1px; background: #000; color: #fff; }
.side { height: 55px; background: linear-gradient(#5252f4, #2828d8 45%, #0202a4); border: 1px solid #1010a0; color: #fff; display: flex; flex-direction: column; align-items: flex-start; }
.lbl { width: 38px; margin: 1px 3px 0; height: 19px; line-height: 18px; text-align: center; border-bottom: 1px solid #8c8cf0; color: #dcdcfc; }
.side.buy { align-items: stretch; }
.side.buy .lbl { align-self: flex-end; }
.px { display: flex; align-items: flex-end; padding-left: 12px; height: 32px; }
.px b { font-size: 11px; line-height: 16px; margin-right: 3px; }
.big { font-size: 28px; line-height: 29px; }
sup { font-size: 12px; font-weight: bold; line-height: 12px; align-self: flex-start; margin: 2px 0 0 4px; }
.vol { position: absolute; left: 46px; top: 0; width: 97px; height: 20px; padding: 1px 2px 2px; background: #000; display: flex; }
.vol button { width: 16px; background: #d5d2cd; display: flex; align-items: center; justify-content: center; }
.vol input { flex: 1; min-width: 0; background: #fff; color: #222; text-align: right; padding-right: 4px; margin: 0 1px; }
.ctabs { display: flex; height: 22px; border-top: 1px solid #fff; border-bottom: 1px solid #fff; padding-left: 3px; box-shadow: inset 0 1px #000; margin: 0 1px; }
.ctabs button { padding: 0 11px; color: #505050; height: 18px; margin-top: 1px; position: relative; white-space: nowrap; }
.ctabs button::after, .ttabs button::after { content: ""; position: absolute; right: 0; top: 3px; height: 12px; border-right: 1px solid #505050; }
.ctabs .cur, .ttabs .cur { background: #fff; color: #000; border: 1px solid #000; border-top: 0; box-shadow: 1px 1px #86827e; }
.ctabs .cur::after, .ttabs .cur::after, .ttabs .pre::after { display: none; }
.ctabs .cur { padding: 0 9px; }
.arr { margin-left: auto; display: flex; gap: 11px; align-items: center; padding-right: 8px; }
.arr i { border: 4px solid transparent; border-right-color: #aaa6a0; border-left: 0; }
.arr .rt { border: 4px solid transparent; border-left-color: #aaa6a0; border-right: 0; }
.term { display: flex; padding: 3px 4px 1px 1px; gap: 2px; }
aside { width: 13px; display: flex; flex-direction: column; align-items: center; }
aside button { width: 13px; height: 14px; display: flex; align-items: center; justify-content: center; }
aside button svg { width: 6px; height: 6px; }
aside span { flex: 1; width: 13px; background: #84807e; color: #d5d2cd; writing-mode: vertical-rl; transform: rotate(180deg); line-height: 13px; padding-top: 3px; }
.panel { flex: 1; min-width: 0; border-bottom: 1px solid #fff; }
.grid { display: flex; border-top: 1px solid #86827e; border-bottom: 1px solid #000; }
.data { flex: 1; min-width: 0; }
table { width: 100%; table-layout: fixed; border-collapse: separate; border-spacing: 0; }
.c1 { width: 108px; } .c2 { width: 186px; } .c3 { width: 84px; } .c4 { width: 67px; } .c5 { width: 100px; }
th { height: 17px; font-weight: normal; text-align: right; padding: 0 7px 0 5px; background: #d5d2cd; border: 1px solid; border-color: #fff #555 #555 #fff; line-height: 14px; white-space: nowrap; }
th:first-child, td:first-child { text-align: left; }
.sort { display: inline-block; width: 9px; height: 8px; margin-left: 12px; }
td { height: 20px; padding: 0 4px; text-align: right; background: #efebef; border-right: 1px solid #cccace; line-height: 20px; white-space: nowrap; }
.sel td { background: #06226a; color: #fff; }
.doc { width: 14px; height: 15px; float: left; margin: 2px 3px 0 0; }
.sum { display: flex; align-items: center; height: 20px; background: #cccace; padding: 0 4px 0 7px; }
.sum i { width: 8px; height: 8px; border-radius: 50%; border: 1px solid #888; background: #bbb; margin-right: 6px; }
.tot { margin-left: auto; }
.scroll { width: 15px; display: flex; flex-direction: column; }
.scroll button, .thumb { height: 16px; background: #d5d2cd; border: 1px solid; border-color: #fff #404040 #404040 #fff; display: flex; align-items: center; justify-content: center; }
.track { flex: 1; background: #ebe9e6; display: flex; flex-direction: column; justify-content: flex-end; }
.thumb { height: 14px; }
.ttabs { display: flex; height: 19px; padding-left: 3px; }
.ttabs button { padding: 2px 9px 0 10px; color: #505050; height: 18px; position: relative; white-space: nowrap; }
.ttabs .cur { padding: 0 8px; height: 18px; }
.ttabs b { font-size: 9px; color: #d81818; line-height: 9px; margin-left: 2px; }
.status { display: flex; flex: 1; margin-top: 3px; border-top: 1px solid #86827e; padding: 3px 0 0; box-shadow: inset 0 1px #fff; }
.status > span { border-left: 1px solid #86827e; box-shadow: inset 1px 0 #fff; padding-left: 4px; line-height: 16px; }
.status > .s0 { flex: 1; border: 0; box-shadow: none; padding-left: 2px; }
.s1 { width: 109px; } .s2 { width: 101px; } .s3 { width: 70px; }
.status > .s4 { width: 161px; display: flex; align-items: center; }
.sig { width: 24px; height: 13px; }
.kb { flex: 1; text-align: center; }
.size { width: 15px; height: 15px; }
.taskbar { height: 45px; background: #d5d2cd; border-top: 1px solid #d5d2cd; box-shadow: inset 0 1px #fff; display: flex; align-items: center; padding: 1px 3px 0 2px; margin-top: 1px; }
.start { width: 51px; height: 38px; display: flex; align-items: center; font-weight: bold; font-size: 12px; border: 1px solid; border-color: #fff #404040 #404040 #fff; box-shadow: inset -1px -1px #86827e; padding-left: 1px; gap: 1px; }
.start svg { width: 16px; height: 16px; }
.tgrip { width: 3px; height: 34px; border: 1px solid; border-color: #fff #86827e #86827e #fff; margin: 0 8px; }
.taskbar > a { width: 50px; display: flex; justify-content: center; }
.taskbar > a svg { width: 32px; height: 32px; }
.app { width: 48px; height: 38px; display: flex; align-items: center; justify-content: center; border: 1px solid; border-color: #fff #404040 #404040 #fff; margin-right: 2px; }
.app > svg { width: 38px; height: 36px; }
.run { background: #fff; border-color: #404040 #fff #fff #404040; }
.alp { width: 32px; height: 32px; border-radius: 2px; background: #0c0808; color: #e8e8e8; font-size: 10px; line-height: 12px; display: flex; flex-direction: column; align-items: center; padding-top: 4px; }
.alp svg { width: 24px; height: 14px; }
.fill { flex: 1; }
.lang { padding-right: 5px; border-right: 1px solid #86827e; line-height: 22px; margin-right: 4px; }
.tray { display: flex; align-items: center; width: 181px; height: 37px; border: 1px solid; border-color: #86827e #fff #fff #86827e; gap: 7px; padding-left: 5px; }
.tray svg { width: 17px; height: 17px; }
.tray .chev { width: 7px; height: 9px; margin-right: 3px; }
.tray .desk { width: 16px; height: 13px; margin-left: auto; }
time { text-align: center; line-height: 16px; margin-left: 6px; }
</style>
